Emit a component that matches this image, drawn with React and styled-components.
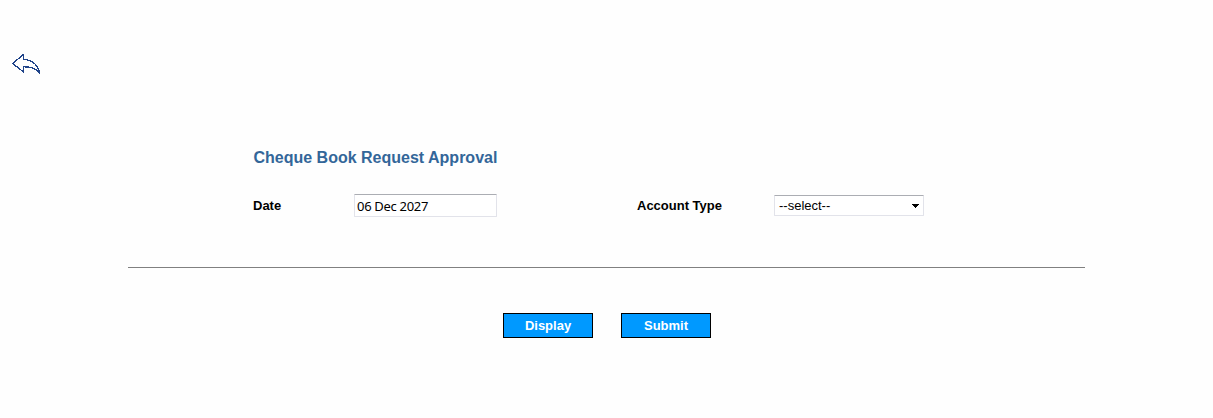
import React, { useState } from 'react';
import styled, { createGlobalStyle } from 'styled-components';

const GlobalStyle = createGlobalStyle`
  * { box-sizing: border-box; }
  body {
    margin: 0;
    background: #fefefe;
    color: #000;
    font-family: "Liberation Sans", Arial, sans-serif;
  }
`;

const Page = styled.div`
  height: 418px;
  padding-top: 53px;
  overflow: hidden;
`;

const BackButton = styled.button`
  display: block;
  width: 30px;
  height: 22px;
  margin-left: 11px;
  padding: 0;
  border: 0;
  background: none;
  cursor: pointer;

  svg { display: block; }
`;

const Panel = styled.form`
  width: 957px;
  margin: 73px 0 0 128px;
`;

const Title = styled.h1`
  margin: 0 0 26px 125.5px;
  font-size: 16px;
  line-height: 20px;
  font-weight: bold;
  color: #336699;
`;

const FieldRow = styled.div`
  display: grid;
  grid-template-columns: 101px 283px 137px 150px;
  align-items: center;
  height: 23px;
  padding-left: 125px;
`;

const Label = styled.label`
  font-size: 13px;
  line-height: 16px;
  font-weight: bold;
`;

const DateInput = styled.input`
  width: 143px;
  height: 23px;
  padding: 1px 2px;
  border: 1px solid #e2e3ea;
  border-top-color: #abadb3;
  border-radius: 1px;
  outline: 0;
  background: #fff;
  color: #000;
  font: 13px/18px "Noto Sans", "Open Sans", sans-serif;
  letter-spacing: -0.3px;
`;

const SelectBox = styled.div`
  display: flex;
  align-items: center;
  justify-content: space-between;
  width: 150px;
  height: 21px;
  padding: 0 4px;
  border: 1px solid #e2e3ea;
  border-top-color: #abadb3;
  border-radius: 1px;
  background: #fff;
  font-size: 13px;
  line-height: 16px;
`;

const Divider = styled.hr`
  height: 1px;
  margin: 50px 0 45px;
  border: 0;
  background: #808080;
`;

const Actions = styled.div`
  display: flex;
  gap: 28px;
  padding-left: 375px;
`;

const ActionButton = styled.button`
  width: 90px;
  height: 25px;
  padding: 0;
  border: 1px solid #000;
  border-radius: 0;
  background: #0099ff;
  color: #fff;
  font: bold 13px/16px "Liberation Sans", Arial, sans-serif;
  cursor: pointer;
`;

function BackIcon() {
  return (
    <svg width="30" height="22" viewBox="0 0 30 22" fill="none" stroke="#1f4389" strokeWidth="1.35" strokeLinejoin="round" shapeRendering="crispEdges">
      <path d="M1.5 10.5 12.5 1.5V6.5C20 6.8 26.5 10.5 28.5 19.9 25 15.1 20 13.7 12.5 13.7V18.9Z" />
    </svg>
  );
}

export default function App() {
  const [date, setDate] = useState('06 Dec 2027');

  return (
    <>
      <GlobalStyle />
      <Page>
        <BackButton type="button" aria-label="Back">
          <BackIcon />
        </BackButton>
        <Panel onSubmit={(e) => e.preventDefault()}>
          <Title>Cheque Book Request Approval</Title>
          <FieldRow>
            <Label htmlFor="date">Date</Label>
            <DateInput id="date" value={date} onChange={(e) => setDate(e.target.value)} />
            <Label as="span">Account Type</Label>
            <SelectBox role="combobox" tabIndex={0} aria-label="Account Type" aria-expanded="false">
              <span>--select--</span>
              <svg width="8" height="4" viewBox="0 0 8 4" shapeRendering="crispEdges">
                <path d="M0 0H8L4 4Z" fill="#000" />
              </svg>
            </SelectBox>
          </FieldRow>
          <Divider />
          <Actions>
            <ActionButton type="button">Display</ActionButton>
            <ActionButton type="submit">Submit</ActionButton>
          </Actions>
        </Panel>
      </Page>
    </>
  );
}
